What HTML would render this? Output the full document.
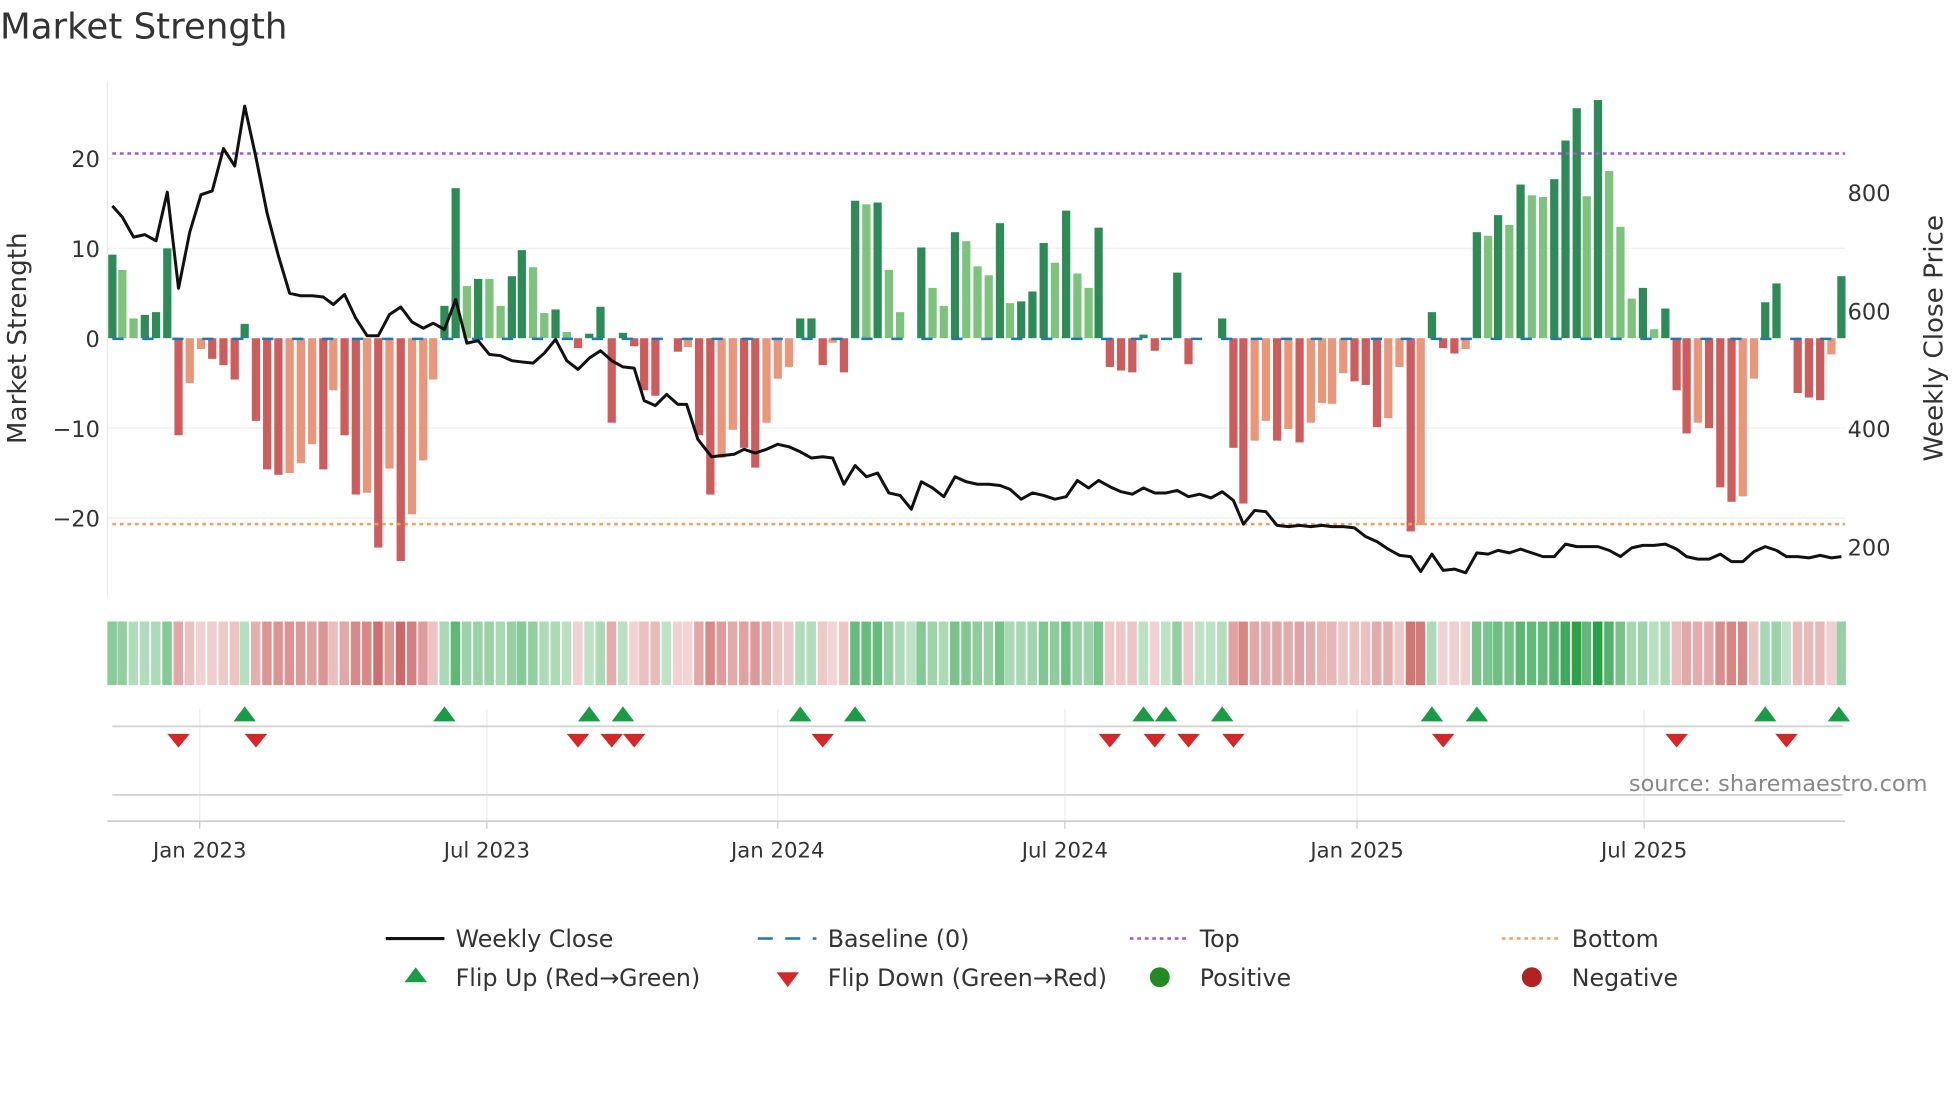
<!DOCTYPE html>
<html><head><meta charset="utf-8"><style>
html,body{margin:0;padding:0;background:#fff;}
svg{display:block;font-family:"DejaVu Sans","Liberation Sans",sans-serif;}
</style></head><body>
<svg id="s" width="1960" height="1102" viewBox="0 0 1570 883" preserveAspectRatio="none" xmlns="http://www.w3.org/2000/svg">
<rect width="1570" height="883" fill="#fff"/>
<text x="0" y="31" font-size="28.5" fill="#333">Market Strength</text>
<g stroke="#eef0f4" stroke-width="1.2">
<line x1="86" x2="1478" y1="127" y2="127"/><line x1="86" x2="1478" y1="199" y2="199"/>
<line x1="86" x2="1478" y1="343" y2="343"/><line x1="86" x2="1478" y1="415" y2="415"/>
</g>
<line x1="86" x2="86" y1="65" y2="478" stroke="#eaeaea"/>
<g font-size="18" fill="#333" text-anchor="end">
<text x="80" y="134">20</text><text x="80" y="206">10</text><text x="80" y="278">0</text>
<text x="80" y="350">−10</text><text x="80" y="422">−20</text>
</g>
<g font-size="18" fill="#333">
<text x="1480" y="161">800</text><text x="1480" y="256">600</text><text x="1480" y="350">400</text><text x="1480" y="445">200</text>
</g>
<text transform="translate(21,271) rotate(-90)" font-size="21" fill="#333" text-anchor="middle">Market Strength</text>
<text transform="translate(1556,271) rotate(-90)" font-size="21" fill="#333" text-anchor="middle">Weekly Close Price</text>
<g id="bars"></g>
<line x1="90" x2="1478" y1="271.5" y2="271.5" stroke="#1f77b4" stroke-width="2" stroke-dasharray="9,15"/>
<line x1="90" x2="1478" y1="123" y2="123" stroke="#9b59d9" stroke-width="2" stroke-dasharray="3,3"/>
<line x1="90" x2="1478" y1="420" y2="420" stroke="#f0a060" stroke-width="2" stroke-dasharray="3,3"/>
<polyline id="price" fill="none" stroke="#111" stroke-width="2.4" stroke-linejoin="round"/>
<g id="heat"></g>
<g stroke="#eee" stroke-width="1">
<line x1="160" x2="160" y1="568" y2="658"/><line x1="390" x2="390" y1="568" y2="658"/><line x1="623" x2="623" y1="568" y2="658"/>
<line x1="853" x2="853" y1="568" y2="658"/><line x1="1087" x2="1087" y1="568" y2="658"/><line x1="1317" x2="1317" y1="568" y2="658"/>
</g>
<line x1="90" x2="1476" y1="582" y2="582" stroke="#d4d4d4" stroke-width="1.5"/>
<line x1="90" x2="1476" y1="637" y2="637" stroke="#d4d4d4" stroke-width="1.5"/>
<line x1="86" x2="1478" y1="658" y2="658" stroke="#d0d0d0" stroke-width="1.5"/>
<g stroke="#ccc"><line x1="160" x2="160" y1="658" y2="664"/><line x1="390" x2="390" y1="658" y2="664"/><line x1="623" x2="623" y1="658" y2="664"/><line x1="853" x2="853" y1="658" y2="664"/><line x1="1087" x2="1087" y1="658" y2="664"/><line x1="1317" x2="1317" y1="658" y2="664"/></g>
<g id="marks"></g>
<text x="1544" y="634" font-size="18" fill="#888" text-anchor="end">source: sharemaestro.com</text>
<g font-size="17" fill="#333" text-anchor="middle">
<text x="160" y="687">Jan 2023</text><text x="390" y="687">Jul 2023</text><text x="623" y="687">Jan 2024</text>
<text x="853" y="687">Jul 2024</text><text x="1087" y="687">Jan 2025</text><text x="1317" y="687">Jul 2025</text>
</g>
<g font-size="19" fill="#333">
<line x1="309" x2="356" y1="752" y2="752" stroke="#111" stroke-width="2.5"/><text x="365" y="759">Weekly Close</text>
<line x1="607" x2="654" y1="752" y2="752" stroke="#1f77b4" stroke-width="2" stroke-dasharray="12,10"/><text x="663" y="759">Baseline (0)</text>
<line x1="905" x2="950" y1="752" y2="752" stroke="#9b59d9" stroke-width="2" stroke-dasharray="3,3"/><text x="961" y="759">Top</text>
<line x1="1203" x2="1248" y1="752" y2="752" stroke="#f0a060" stroke-width="2" stroke-dasharray="3,3"/><text x="1259" y="759">Bottom</text>
<polygon points="333,775 324,787 342,787" fill="#1a9c46"/><text x="365" y="790">Flip Up (Red→Green)</text>
<polygon points="622,779 640,779 631,791" fill="#d62728"/><text x="663" y="790">Flip Down (Green→Red)</text>
<circle cx="929" cy="783" r="8" fill="#228b22"/><text x="961" y="790">Positive</text>
<circle cx="1227" cy="783" r="8" fill="#b22222"/><text x="1259" y="790">Negative</text>
</g>
</svg>
<script>
var B=[[90,9.3,'d'],[98,7.6,'l'],[107,2.2,'l'],[116,2.6,'d'],[125,2.9,'d'],[134,10,'d'],[143,-10.8,'r'],[152,-5,'s'],[161,-1.2,'s'],[170,-2.3,'r'],[179,-3,'r'],[188,-4.6,'r'],[196,1.6,'d'],[205,-9.2,'r'],[214,-14.6,'r'],[223,-15.2,'r'],[232,-15,'s'],[241,-13.9,'s'],[250,-11.8,'s'],[259,-14.6,'r'],[267,-5.8,'s'],[276,-10.8,'r'],[285,-17.4,'r'],[294,-17.2,'s'],[303,-23.3,'r'],[312,-14.5,'s'],[321,-24.8,'r'],[330,-19.6,'s'],[339,-13.6,'s'],[347,-4.6,'s'],[356,3.6,'d'],[365,16.7,'d'],[374,5.8,'l'],[383,6.6,'d'],[392,6.6,'l'],[401,3.6,'l'],[410,6.9,'d'],[418,9.8,'d'],[427,7.9,'l'],[436,2.8,'l'],[445,3.2,'d'],[454,0.7,'l'],[463,-1.1,'r'],[472,0.5,'d'],[481,3.5,'d'],[490,-9.4,'r'],[499,0.6,'d'],[508,-0.9,'r'],[516,-5.8,'r'],[525,-6.4,'r'],[534,0,'s'],[543,-1.5,'r'],[551,-1,'s'],[560,-10.8,'r'],[569,-17.4,'r'],[578,-13.3,'s'],[587,-10.2,'s'],[596,-12.2,'r'],[605,-14.4,'r'],[614,-9.4,'s'],[623,-4.5,'s'],[632,-3.2,'s'],[641,2.2,'d'],[650,2.2,'d'],[659,-3,'r'],[667,-0.5,'s'],[676,-3.8,'r'],[685,15.3,'d'],[694,14.9,'l'],[703,15.1,'d'],[712,7.6,'l'],[721,2.9,'l'],[730,0,'l'],[738,10.1,'d'],[747,5.6,'l'],[756,3.6,'l'],[765,11.8,'d'],[774,10.8,'l'],[783,8,'l'],[792,7,'l'],[801,12.8,'d'],[809,3.9,'l'],[818,4.1,'d'],[827,5.2,'d'],[836,10.6,'d'],[845,8.4,'l'],[854,14.2,'d'],[863,7.2,'l'],[872,5.6,'l'],[880,12.3,'d'],[889,-3.2,'r'],[898,-3.6,'r'],[907,-3.8,'r'],[916,0.4,'d'],[925,-1.4,'r'],[934,0,'l'],[943,7.3,'d'],[952,-2.9,'r'],[961,0,'s'],[970,0,'s'],[979,2.2,'d'],[988,-12.2,'r'],[996,-18.4,'r'],[1005,-11.4,'s'],[1014,-9.2,'s'],[1023,-11.4,'r'],[1032,-10.1,'s'],[1041,-11.6,'r'],[1050,-9.4,'s'],[1059,-7.2,'s'],[1067,-7.3,'s'],[1076,-3.9,'s'],[1085,-4.8,'r'],[1094,-5.2,'r'],[1103,-9.9,'r'],[1112,-8.9,'s'],[1121,-3.2,'s'],[1130,-21.5,'r'],[1138,-20.8,'s'],[1147,2.9,'d'],[1156,-1.1,'r'],[1165,-1.7,'r'],[1174,-1.2,'s'],[1183,11.8,'d'],[1192,11.4,'l'],[1200,13.7,'d'],[1209,12.6,'l'],[1218,17.1,'d'],[1227,15.9,'l'],[1236,15.7,'l'],[1245,17.7,'d'],[1254,22,'d'],[1263,25.6,'d'],[1271,15.8,'l'],[1280,26.5,'d'],[1289,18.6,'l'],[1298,12.4,'l'],[1307,4.4,'l'],[1316,5.6,'d'],[1325,1,'l'],[1334,3.3,'d'],[1343,-5.8,'r'],[1351,-10.6,'r'],[1360,-9.4,'s'],[1369,-10,'r'],[1378,-16.6,'r'],[1387,-18.2,'r'],[1396,-17.6,'s'],[1405,-4.5,'s'],[1414,4,'d'],[1423,6.1,'d'],[1431,0,'s'],[1440,-6.1,'r'],[1449,-6.6,'r'],[1458,-6.9,'r'],[1467,-1.8,'s'],[1475,6.9,'d']];
var C={d:'#2e8b57',l:'#7dc27d',r:'#cd5c5c',s:'#e9967a'};
var ns='http://www.w3.org/2000/svg',g=document.getElementById('bars'),h=document.getElementById('heat');
function el(p,t,a){var e=document.createElementNS(ns,t);for(var k in a)e.setAttribute(k,a[k]);p.appendChild(e);return e;}
B.forEach(function(b){var v=b[1],y0=271,y1=271-v*7.2;
 if(v!=0)el(g,'rect',{x:b[0]-3.3,y:Math.min(y0,y1),width:6.6,height:Math.abs(y1-y0),fill:C[b[2]]});
 var t=Math.min(Math.abs(v)/26,1),col;
 if(v>=0){var a=0.3+0.7*t;col='rgba(40,160,70,'+a.toFixed(2)+')';}
 else{var a=0.2+0.6*t;col='rgba(190,60,60,'+a.toFixed(2)+')';}
 el(h,'rect',{x:b[0]-4,y:498,width:7.6,height:51,fill:col});
});
var P=[[90,165],[98,174],[107,190],[116,188],[125,193],[134,154],[143,231],[152,186],[161,156],[170,153],[179,119],[188,133],[196,85],[205,126],[214,171],[223,205],[232,235],[241,237],[250,237],[259,238],[267,244],[276,236],[285,255],[294,269],[303,269],[312,252],[321,246],[330,258],[339,263],[347,259],[356,264],[365,240],[374,275],[383,273],[392,284],[401,285],[410,289],[418,290],[427,291],[436,283],[445,272],[454,289],[463,296],[472,287],[481,281],[490,289],[499,294],[508,295],[516,321],[525,325],[534,316],[543,324],[550,324],[559,352],[570,366],[579,365],[588,364],[596,360],[605,363],[614,360],[623,356],[632,358],[641,362],[650,367],[659,366],[667,367],[676,388],[685,373],[694,382],[703,379],[712,395],[721,397],[730,408],[738,386],[747,391],[756,398],[765,382],[774,386],[783,388],[792,388],[801,389],[809,392],[818,400],[827,395],[836,397],[845,400],[854,398],[863,385],[872,391],[880,385],[889,390],[898,394],[907,396],[916,391],[925,395],[934,395],[943,393],[952,398],[961,396],[970,399],[979,394],[988,401],[996,420],[1005,409],[1014,410],[1023,421],[1032,422],[1041,421],[1050,422],[1059,421],[1067,422],[1076,422],[1085,423],[1094,430],[1103,434],[1112,440],[1121,445],[1130,446],[1138,458],[1147,444],[1156,457],[1165,456],[1174,459],[1183,443],[1192,444],[1200,441],[1209,443],[1218,440],[1227,443],[1236,446],[1245,446],[1254,436],[1263,438],[1271,438],[1280,438],[1289,441],[1298,446],[1307,439],[1316,437],[1325,437],[1334,436],[1343,440],[1351,446],[1360,448],[1369,448],[1378,444],[1387,450],[1396,450],[1405,442],[1414,438],[1423,441],[1431,446],[1440,446],[1449,447],[1458,445],[1467,447],[1475,446]];
document.getElementById('price').setAttribute('points',P.map(function(p){return p.join(',')}).join(' '));
var m=document.getElementById('marks');
[196,356,472,499,641,685,916,934,979,1147,1183,1414,1473].forEach(function(x){el(m,'polygon',{points:(x)+',566 '+(x-9)+',578 '+(x+9)+',578',fill:'#1a9c46'});});
[143,205,463,490,508,659,889,925,952,988,1156,1343,1431].forEach(function(x){el(m,'polygon',{points:(x-9)+',588 '+(x+9)+',588 '+x+',599',fill:'#d62728'});});
</script>
</body></html>
